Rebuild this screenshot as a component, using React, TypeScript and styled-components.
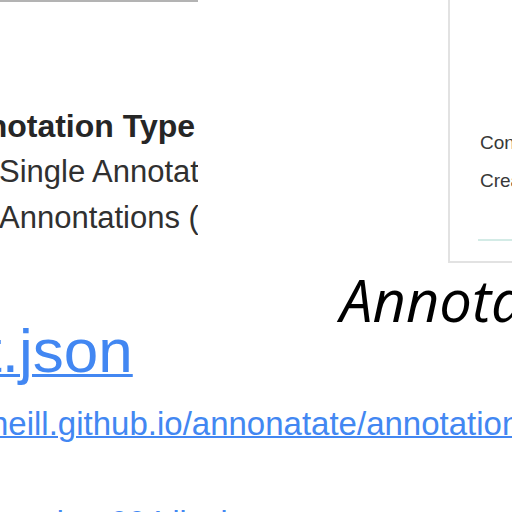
import React from "react";
import styled, { createGlobalStyle } from "styled-components";

const Global = createGlobalStyle`
  html, body { margin: 0; padding: 0; background: #ffffff; }
  body { font-family: "Liberation Sans", Arial, sans-serif; }
`;

const Page = styled.div`
  width: 512px;
  height: 512px;
  overflow: hidden;
  background: #fff;
  display: flex;
  flex-direction: column;
`;

const TopRow = styled.div`
  display: flex;
  align-items: flex-start;
  height: 263px;
  flex: 0 0 auto;
`;

const TablePanel = styled.div`
  width: 198px;
  flex: 0 0 198px;
  height: 100%;
  box-sizing: border-box;
  border-top: 2px solid #b3b3b3;
  overflow: hidden;
  padding-top: 101px;
  white-space: nowrap;
  font-size: 31px;
  line-height: 46px;
`;

const TableHead = styled.div`
  font-weight: 700;
  font-size: 32px;
  color: #262626;
  margin-left: -55px;
`;

const TableCell = styled.div`
  color: #303030;
  margin-left: -1px;
`;

const Card = styled.div`
  margin-left: auto;
  flex: 0 0 64px;
  box-sizing: border-box;
  border-left: 2px solid #e2e2e2;
  border-bottom: 2px solid #e2e2e2;
  padding: 124px 0 20px 28px;
  overflow: hidden;
  white-space: nowrap;
`;

const CardLine = styled.div`
  font-size: 19px;
  line-height: 38px;
  color: #383838;
  padding-left: 2px;
`;

const CardRule = styled.div`
  margin-top: 39px;
  height: 2px;
  width: 200px;
  background: #d3ebe6;
`;

const Title = styled.div`
  margin-top: 13px;
  padding-left: 340px;
  font-family: "Open Sans", "Liberation Sans", sans-serif;
  font-style: italic;
  font-size: 58px;
  line-height: 48px;
  color: #000;
  white-space: nowrap;
`;

const Link = styled.a<{ $size: number; $lh: number; $mt: number; $ml: number }>`
  display: block;
  flex: 0 0 auto;
  white-space: nowrap;
  color: #4287f2;
  text-decoration: underline;
  font-size: ${(p) => p.$size}px;
  line-height: ${(p) => p.$lh}px;
  margin-top: ${(p) => p.$mt}px;
  margin-left: ${(p) => p.$ml}px;
  text-decoration-thickness: ${(p) => (p.$size > 40 ? 3 : 2)}px;
`;

export default function App() {
  return (
    <>
      <Global />
      <Page>
        <TopRow>
          <TablePanel>
            <TableHead>Annotation Type</TableHead>
            <TableCell>Single Annotation</TableCell>
            <TableCell>Annontations (list)</TableCell>
          </TablePanel>
          <Card>
            <CardLine>Content</CardLine>
            <CardLine>Created</CardLine>
            <CardRule />
          </Card>
        </TopRow>
        <Title>Annotations</Title>
        <Link href="#" $size={62} $lh={54} $mt={0} $ml={-74}>
          list.json
        </Link>
        <Link href="#" $size={33} $lh={40} $mt={26} $ml={-10}>
          neill.github.io/annonatate/annotations/list.json
        </Link>
        <Link href="#" $size={32} $lh={40} $mt={58} $ml={-50}>
          annotation-004.list.json
        </Link>
      </Page>
    </>
  );
}
